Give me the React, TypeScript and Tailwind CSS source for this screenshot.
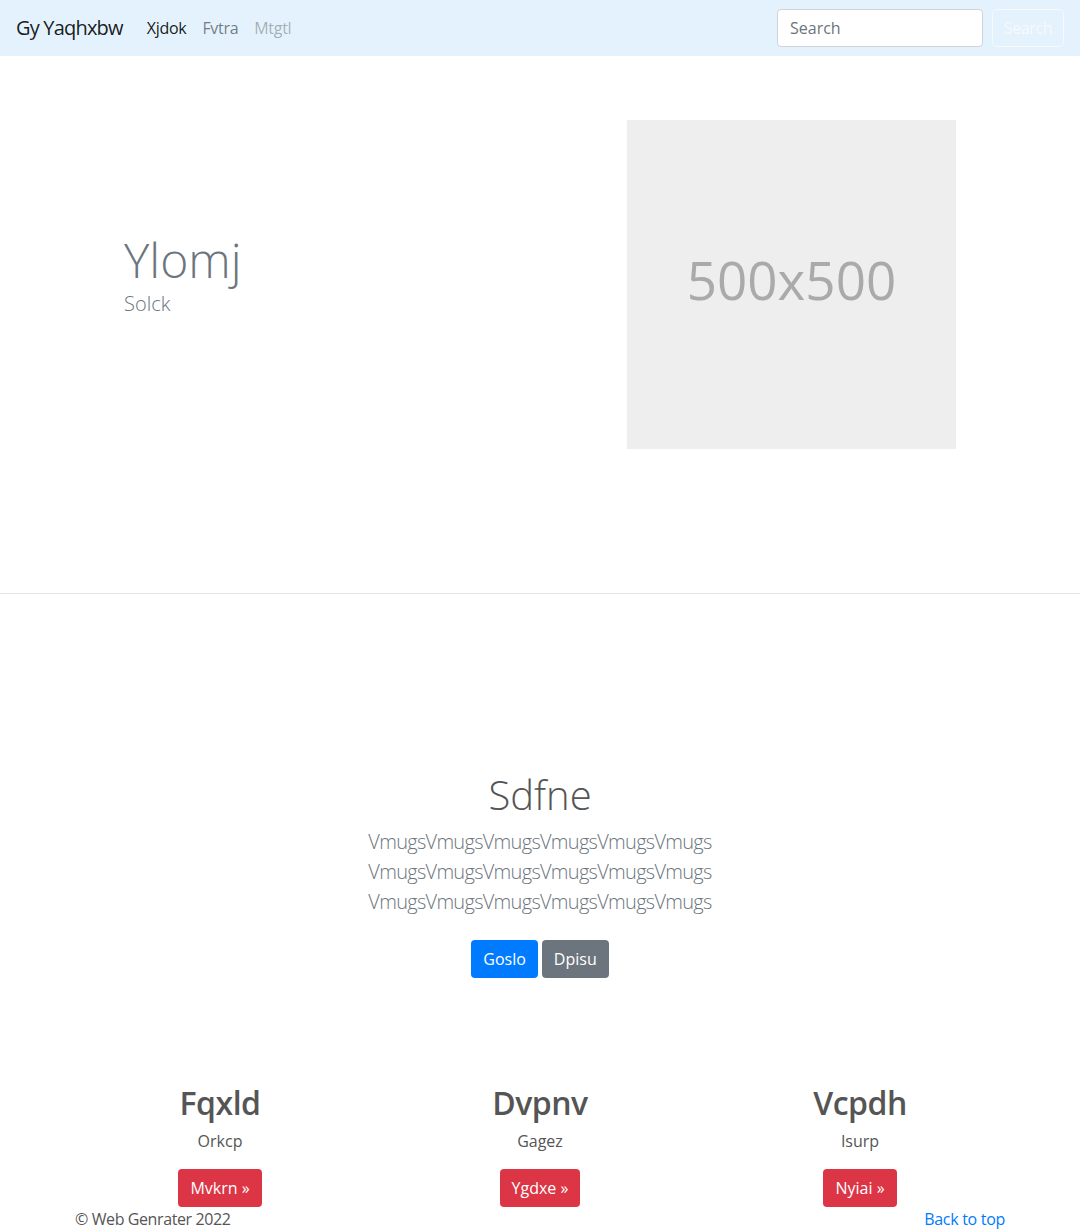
import React from 'react'

const font = { fontFamily: '"Open Sans", "Noto Sans", sans-serif' }

const features = [
  { title: 'Fqxld', text: 'Orkcp', button: 'Mvkrn' },
  { title: 'Dvpnv', text: 'Gagez', button: 'Ygdxe' },
  { title: 'Vcpdh', text: 'Isurp', button: 'Nyiai' },
]

const App = () => {
  return (
    <div className="w-[1080px] bg-white text-[#212529]" style={font}>
      {/* Navbar */}
      <nav className="h-[56px] bg-[#e3f2fd] flex items-center px-4">
        <span className="text-[20px] leading-[30px] tracking-[-0.8px] text-black/90 mr-4">Gy Yaqhxbw</span>
        <div className="flex items-center text-[16px] leading-6 tracking-[-0.3px]">
          <span className="px-2 text-black/90">Xjdok</span>
          <span className="px-2 text-black/50">Fvtra</span>
          <span className="px-2 text-black/30">Mtgtl</span>
        </div>
        <div className="ml-auto flex items-center">
          <div className="w-[206px] h-[38px] bg-white border border-[#ced4da] rounded-[4px] px-3 flex items-center text-[16px] text-[#6c757d] mr-[9px]">
            Search
          </div>
          <button className="w-[72px] h-[38px] border border-[#f8f9fa] rounded-[4px] text-[16px] tracking-[-0.4px] text-[#f8f9fa]">
            Search
          </button>
        </div>
      </nav>

      {/* Hero */}
      <section className="w-[960px] mx-auto flex items-center pt-[64px] pb-[144px]">
        <div className="w-[480px] pl-[64px] pb-[20px] flex flex-col">
          <h1 className="text-[48px] leading-[58px] font-light text-[#6c757d]">Ylomj</h1>
          <p className="text-[20px] leading-[30px] font-light text-[#6c757d]">Solck</p>
        </div>
        <div className="w-[480px] pl-[87px]">
          <div className="w-[329px] h-[329px] bg-[#eeeeee] flex items-center justify-center">
            <span className="text-[53px] text-[#aaaaaa] pb-[10px]">500x500</span>
          </div>
        </div>
      </section>

      <hr className="border-0 border-t border-black/10" />

      {/* Intro */}
      <section className="pt-[177px] flex flex-col items-center text-center">
        <h2 className="text-[40px] leading-[48px] font-light text-[#555555] mb-2">Sdfne</h2>
        <p className="text-[20px] leading-[30px] font-light tracking-[-0.7px] text-[#6c757d]">
          <span className="block">VmugsVmugsVmugsVmugsVmugsVmugs</span>
          <span className="block">VmugsVmugsVmugsVmugsVmugsVmugs</span>
          <span className="block">VmugsVmugsVmugsVmugsVmugsVmugs</span>
        </p>
        <div className="mt-[23px] flex gap-1">
          <button className="h-[38px] px-3 rounded-[4px] bg-[#007bff] text-white text-[16px]">Goslo</button>
          <button className="h-[38px] px-3 rounded-[4px] bg-[#6c757d] text-white text-[16px]">Dpisu</button>
        </div>
      </section>

      {/* Features */}
      <section className="w-[960px] mx-auto grid grid-cols-3 pt-[106px]">
        {features.map((f) => (
          <div key={f.title} className="flex flex-col items-center text-center">
            <h3 className="text-[32px] leading-[38px] font-semibold tracking-[-0.5px] text-[#555555]">{f.title}</h3>
            <p className="mt-[7px] text-[16px] leading-6 text-[#555555]">{f.text}</p>
            <button className="mt-4 h-[38px] px-3 rounded-[4px] bg-[#dc3545] text-white text-[16px]">
              {f.button} »
            </button>
          </div>
        ))}
      </section>

      {/* Footer */}
      <footer className="w-[930px] mx-auto flex justify-between text-[16px] leading-6">
        <span className="text-[#555555] tracking-[-0.4px]">© Web Genrater 2022</span>
        <span className="text-[#007bff] tracking-[-0.3px]">Back to top</span>
      </footer>
    </div>
  )
}

export default App
